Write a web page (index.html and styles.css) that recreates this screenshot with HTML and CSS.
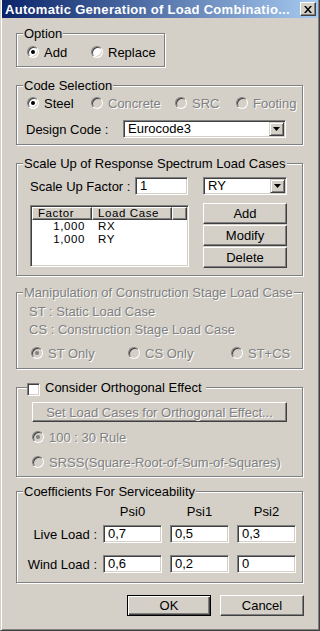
FILE: index.html
```html
<!DOCTYPE html>
<html>
<head>
<meta charset="utf-8">
<link rel="stylesheet" href="styles.css">
</head>
<body>
<div class="window">
  <div class="titlebar">
    <span class="title">Automatic Generation of Load Combinatio...</span>
    <span class="close"><svg width="8" height="7" viewBox="0 0 8 7"><path d="M0 0h2l2 2.4L6 0h2L5 3.5 8 7H6L4 4.6 2 7H0l3-3.5z" fill="#000"/></svg></span>
  </div>
  <div class="client">
    <fieldset class="group g-option">
      <legend>Option</legend>
      <div class="gbody b-option">
        <div class="row">
          <span class="radio checked w64"><i></i>Add</span>
          <span class="radio"><i></i>Replace</span>
        </div>
      </div>
    </fieldset>

    <fieldset class="group g-code">
      <legend>Code Selection</legend>
      <div class="gbody b-code">
        <div class="row">
          <span class="radio checked w64"><i></i>Steel</span>
          <span class="radio disabled w84"><i></i>Concrete</span>
          <span class="radio disabled w61"><i></i>SRC</span>
          <span class="radio disabled"><i></i>Footing</span>
        </div>
        <div class="row design-row">
          <span class="design-label">Design Code :</span>
          <div class="combo w163"><span class="combo-text">Eurocode3</span><span class="drop"><svg width="7" height="4" viewBox="0 0 7 4"><path d="M0 0h7L3.5 4z" fill="#000"/></svg></span></div>
        </div>
      </div>
    </fieldset>

    <fieldset class="group g-scale">
      <legend>Scale Up of Response Spectrum Load Cases</legend>
      <div class="gbody b-scale">
        <div class="row scale-top">
          <span class="scale-label">Scale Up Factor :</span>
          <span class="field w53">1</span>
          <div class="combo w84 scale-combo"><span class="combo-text">RY</span><span class="drop"><svg width="7" height="4" viewBox="0 0 7 4"><path d="M0 0h7L3.5 4z" fill="#000"/></svg></span></div>
        </div>
        <div class="row scale-main">
          <div class="list">
            <div class="lv-head">
              <span class="c1">Factor</span>
              <span class="c2">Load Case</span>
              <span class="c3"></span>
            </div>
            <div class="lv-row"><span class="c1 num">1,000</span><span class="c2">RX</span></div>
            <div class="lv-row"><span class="c1 num">1,000</span><span class="c2">RY</span></div>
          </div>
          <div class="btn-col">
            <span class="btn">Add</span>
            <span class="btn">Modify</span>
            <span class="btn">Delete</span>
          </div>
        </div>
      </div>
    </fieldset>

    <fieldset class="group g-manip">
      <legend class="disabled">Manipulation of Construction Stage Load Case</legend>
      <div class="gbody b-manip">
        <div class="line disabled">ST : Static Load Case</div>
        <div class="line disabled">CS : Construction Stage Load Case</div>
        <div class="row manip-radios">
          <span class="radio disabled checked w97"><i></i>ST Only</span>
          <span class="radio disabled w103"><i></i>CS Only</span>
          <span class="radio disabled"><i></i>ST+CS</span>
        </div>
      </div>
    </fieldset>

    <fieldset class="group g-ortho">
      <legend class="check-legend"><span class="check"></span><span>Consider Orthogonal Effect</span></legend>
      <div class="gbody b-ortho">
        <span class="btn wide disabled">Set Load Cases for Orthogonal Effect...</span>
        <span class="radio disabled checked r1"><i></i>100 : 30 Rule</span>
        <span class="radio disabled r2"><i></i>SRSS(Square-Root-of-Sum-of-Squares)</span>
      </div>
    </fieldset>

    <fieldset class="group g-coeff">
      <legend>Coefficients For Serviceability</legend>
      <div class="gbody b-coeff">
        <div class="row psi-row">
          <span class="lbl"></span>
          <span class="psi">Psi0</span>
          <span class="psi">Psi1</span>
          <span class="psi">Psi2</span>
        </div>
        <div class="row val-row live">
          <span class="lbl">Live Load :</span>
          <span class="field w59">0,7</span>
          <span class="field w59">0,5</span>
          <span class="field w59">0,3</span>
        </div>
        <div class="row val-row wind">
          <span class="lbl">Wind Load :</span>
          <span class="field w59">0,6</span>
          <span class="field w59">0,2</span>
          <span class="field w59">0</span>
        </div>
      </div>
    </fieldset>

    <div class="row footer">
      <span class="btn default w84">OK</span>
      <span class="btn w84">Cancel</span>
    </div>
  </div>
</div>
</body>
</html>
```

FILE: styles.css
```css
* { box-sizing: border-box; }
html, body { margin: 0; padding: 0; }
body {
  width: 320px;
  height: 631px;
  overflow: hidden;
  background: #d4d0c8;
  font-family: "Liberation Sans", Arial, sans-serif;
  font-size: 13px;
  color: #000;
}
.window {
  width: 320px;
  height: 631px;
  background: #d4d0c8;
  border-left: 1px solid #d4d0c8;
  border-right: 1px solid #404040;
  border-bottom: 1px solid #404040;
  box-shadow: inset 1px 0 0 #fff, inset -1px -1px 0 #808080;
  padding: 0 1px 1px 1px;
}
.titlebar {
  height: 18px;
  display: flex;
  align-items: center;
  padding: 0 2px 0 3px;
  background: linear-gradient(to right, #0a246a, #a6caf0);
  color: #fff;
  font-weight: bold;
  font-size: 13px;
  letter-spacing: 0.3px;
  white-space: nowrap;
}
.title { overflow: hidden; }
.close {
  margin-left: auto;
  width: 16px;
  height: 14px;
  flex: none;
  background: #d4d0c8;
  border: 1px solid;
  border-color: #fff #404040 #404040 #fff;
  box-shadow: inset -1px -1px 0 #808080;
  display: flex;
  align-items: center;
  justify-content: center;
}
.client { padding: 0 14px; }
.row { display: flex; align-items: center; }

.group {
  margin: 0;
  padding: 0;
  min-width: 0;
  width: 287px;
  border: 1px solid #808080;
  box-shadow: inset 1px 1px 0 #fff, 1px 1px 0 #fff;
}
.group legend {
  margin-left: 6px;
  padding: 0 1px;
  height: 13px;
  line-height: 13px;
  background: #d4d0c8;
  white-space: nowrap;
}
.g-option { width: 149px; margin-top: 9px; }
.g-code { margin-top: 12px; }
.g-scale { margin-top: 12px; }
.g-manip { margin-top: 10px; }
.g-ortho { margin-top: 12px; }
.g-coeff { margin-top: 8px; }

.b-option { padding: 4px 0 6px 10px; }
.b-code { padding: 3px 0 6px 10px; }
.b-scale { padding: 7px 0 7px 13px; }
.b-manip { padding: 4px 0 7px 12px; }
.b-ortho { padding: 8px 0 6px 15px; display: flex; flex-direction: column; align-items: flex-start; }
.b-coeff { padding: 6px 0 9px 0; }

.disabled { color: #808080; text-shadow: 1px 1px 0 #fff; }

.radio { display: flex; align-items: center; gap: 5px; height: 16px; white-space: nowrap; flex: none; }
.radio i {
  position: relative;
  width: 12px;
  height: 12px;
  flex: none;
  border-radius: 50%;
  border: 1px solid;
  border-color: #808080 #fff #fff #808080;
  background: #fff;
  box-shadow: inset 1px 1px 0 #404040, inset -1px -1px 0 #d4d0c8;
}
.radio.checked i::after {
  content: "";
  position: absolute;
  left: 3px;
  top: 3px;
  width: 4px;
  height: 4px;
  border-radius: 50%;
  background: #000;
}
.radio.disabled i { background: #d4d0c8; }
.radio.disabled.checked i::after { background: #808080; }

.w53 { width: 53px; }
.w59 { width: 59px; }
.w61 { width: 61px; }
.w64 { width: 64px; }
.w84 { width: 84px; }
.w97 { width: 97px; }
.w103 { width: 103px; }
.w163 { width: 163px; }

.field, .combo {
  height: 18px;
  background: #fff;
  border: 1px solid;
  border-color: #808080 #fff #fff #808080;
  box-shadow: inset 1px 1px 0 #404040, inset -1px -1px 0 #d4d0c8;
  white-space: nowrap;
  overflow: hidden;
}
.field { padding: 0 3px 0 4px; line-height: 16px; flex: none; }
.combo { display: flex; align-items: center; padding: 1px 1px 1px 4px; flex: none; }
.combo-text { line-height: 14px; }
.drop {
  margin-left: auto;
  width: 15px;
  height: 14px;
  flex: none;
  background: #d4d0c8;
  border: 1px solid;
  border-color: #d4d0c8 #404040 #404040 #d4d0c8;
  box-shadow: inset 1px 1px 0 #fff, inset -1px -1px 0 #808080;
  display: flex;
  align-items: center;
  justify-content: center;
}

.design-row { margin-top: 9px; }
.design-label { width: 97px; margin-left: -1px; }

.scale-label { width: 105px; white-space: nowrap; }
.scale-combo { margin-left: 15px; }
.scale-main { margin-top: 8px; align-items: flex-start; }

.list {
  width: 159px;
  height: 62px;
  margin-top: 2px;
  background: #fff;
  border: 1px solid;
  border-color: #808080 #fff #fff #808080;
  box-shadow: inset 1px 1px 0 #404040, inset -1px -1px 0 #d4d0c8;
  padding: 1px;
  overflow: hidden;
  font-size: 11.5px;
  letter-spacing: 0.6px;
}
.lv-head { display: flex; height: 13px; }
.lv-head span {
  height: 13px;
  line-height: 11px;
  padding-left: 5px;
  background: #d4d0c8;
  border: 1px solid;
  border-color: #fff #404040 #404040 #fff;
  box-shadow: inset -1px -1px 0 #808080;
  white-space: nowrap;
}
.c1 { width: 60px; flex: none; }
.c2 { width: 80px; flex: none; }
.c3 { flex: 1; }
.lv-row { display: flex; height: 13px; line-height: 13px; }
.lv-row .num { text-align: right; padding-right: 7px; }
.lv-row .c2 { padding-left: 6px; }

.btn-col { display: flex; flex-direction: column; gap: 1px; margin-left: 14px; width: 84px; }
.btn {
  height: 21px;
  background: #d4d0c8;
  border: 1px solid;
  border-color: #fff #404040 #404040 #fff;
  box-shadow: inset -1px -1px 0 #808080;
  display: flex;
  align-items: center;
  justify-content: center;
  white-space: nowrap;
  flex: none;
}
.btn.default {
  border-color: #000;
  box-shadow: inset 1px 1px 0 #fff, inset -1px -1px 0 #404040, inset -2px -2px 0 #808080;
}
.btn.wide { width: 255px; height: 20px; }

.line { height: 18px; line-height: 18px; white-space: nowrap; }
.manip-radios { margin-top: 6px; padding-left: 2px; }

.check-legend.check-legend {
  margin-left: 10px;
  padding: 0 4px 0 0;
  display: flex;
  align-items: center;
  gap: 5px;
}
.check {
  width: 13px;
  height: 13px;
  flex: none;
  margin: 2px 0 -2px;
  background: #fff;
  border: 1px solid;
  border-color: #808080 #fff #fff #808080;
  box-shadow: inset 1px 1px 0 #404040, inset -1px -1px 0 #d4d0c8;
}
.r1 { margin-top: 7px; }
.r2 { margin-top: 9px; }

.lbl { width: 80px; margin-right: 6px; text-align: right; white-space: nowrap; flex: none; }
.psi-row { height: 14px; gap: 8px; }
.psi-row .lbl { margin-right: -2px; }
.psi { width: 59px; text-align: center; flex: none; }
.val-row .field + .field { margin-left: 8px; }
.live { margin-top: 7px; }
.wind { margin-top: 12px; }

.footer { justify-content: flex-end; gap: 9px; margin-top: 12px; }
```
